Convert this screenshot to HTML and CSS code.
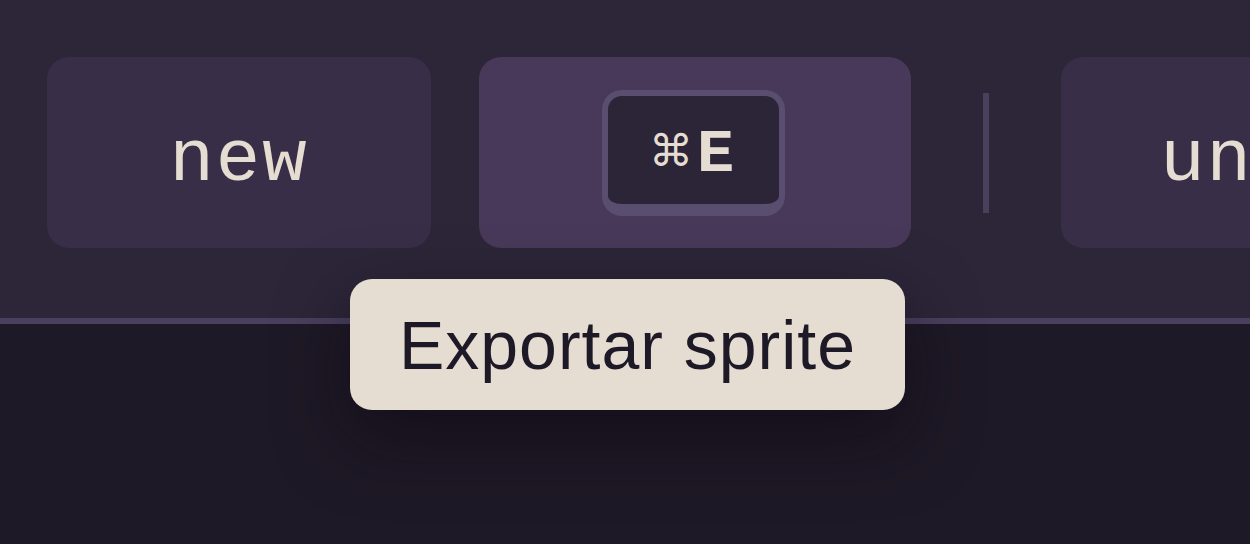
FILE: index.html
```html
<!DOCTYPE html>
<html>
<head>
    <title>Sprite editor toolbar</title>
    <meta charset="utf-8">
    <meta name="viewport" content="width=device-width, initial-scale=1">
    <link rel="stylesheet" href="styles.css">
</head>
<body>
    <div class="toolbar">
        <button class="tool-button">new</button>

        <div class="tool-wrap">
            <button class="tool-button active">
                <kbd class="key"><span class="key-mod">⌘</span>E</kbd>
            </button>
            <div class="tooltip">Exportar sprite</div>
        </div>

        <div class="divider"></div>

        <button class="tool-button">undo</button>
        <button class="tool-button">redo</button>
    </div>
</body>
</html>
```

FILE: styles.css
```css
body {
    margin: 0;
    background: #1e1926;
    font-family: "Liberation Sans", Arial, sans-serif;
    height: 544px;
    overflow: hidden;
}
.toolbar {
    display: flex;
    align-items: center;
    gap: 48px;
    padding: 57px 47px 70px;
    background: #2c2638;
    border-bottom: 6px solid #4a3f5e;
    white-space: nowrap;
}
.tool-button {
    flex-shrink: 0;
    display: flex;
    align-items: center;
    justify-content: center;
    box-sizing: border-box;
    width: 384px;
    height: 191px;
    padding: 14px 0 0;
    border: none;
    border-radius: 22px;
    background: #382e47;
    color: #e5ddd2;
    font-family: "Liberation Mono", "DejaVu Sans Mono", monospace;
    font-size: 74px;
    letter-spacing: 2px;
    cursor: pointer;
}
.tool-button.active {
    width: 432px;
    padding: 0 3px 0 0;
    background: #48395a;
}
.tool-wrap {
    position: relative;
    flex-shrink: 0;
}
.key {
    display: flex;
    align-items: center;
    justify-content: center;
    gap: 4px;
    box-sizing: border-box;
    width: 183px;
    height: 126px;
    padding: 10px 4px 0 0;
    border: 6px solid #5a4e70;
    border-bottom-width: 12px;
    border-radius: 20px;
    background: #2c2538;
    color: #e5ddd2;
    font-family: "Liberation Mono", "DejaVu Sans Mono", monospace;
    font-size: 62px;
    font-weight: bold;
    letter-spacing: 0;
}
.key-mod {
    margin-top: -8px;
    font-family: "DejaVu Sans", sans-serif;
    font-size: 44px;
    font-weight: normal;
}
.divider {
    flex-shrink: 0;
    width: 6px;
    height: 120px;
    margin: 0 24px;
    background: #4a3f5c;
}
.tooltip {
    position: absolute;
    top: 222px;
    left: -129px;
    z-index: 2;
    box-sizing: border-box;
    width: 555px;
    height: 131px;
    display: flex;
    align-items: center;
    justify-content: center;
    border-radius: 22px;
    background: #e5ddd2;
    color: #1e1926;
    font-size: 68px;
    letter-spacing: 1px;
    box-shadow: 0 28px 70px rgba(12, 8, 18, 0.55);
}
```
